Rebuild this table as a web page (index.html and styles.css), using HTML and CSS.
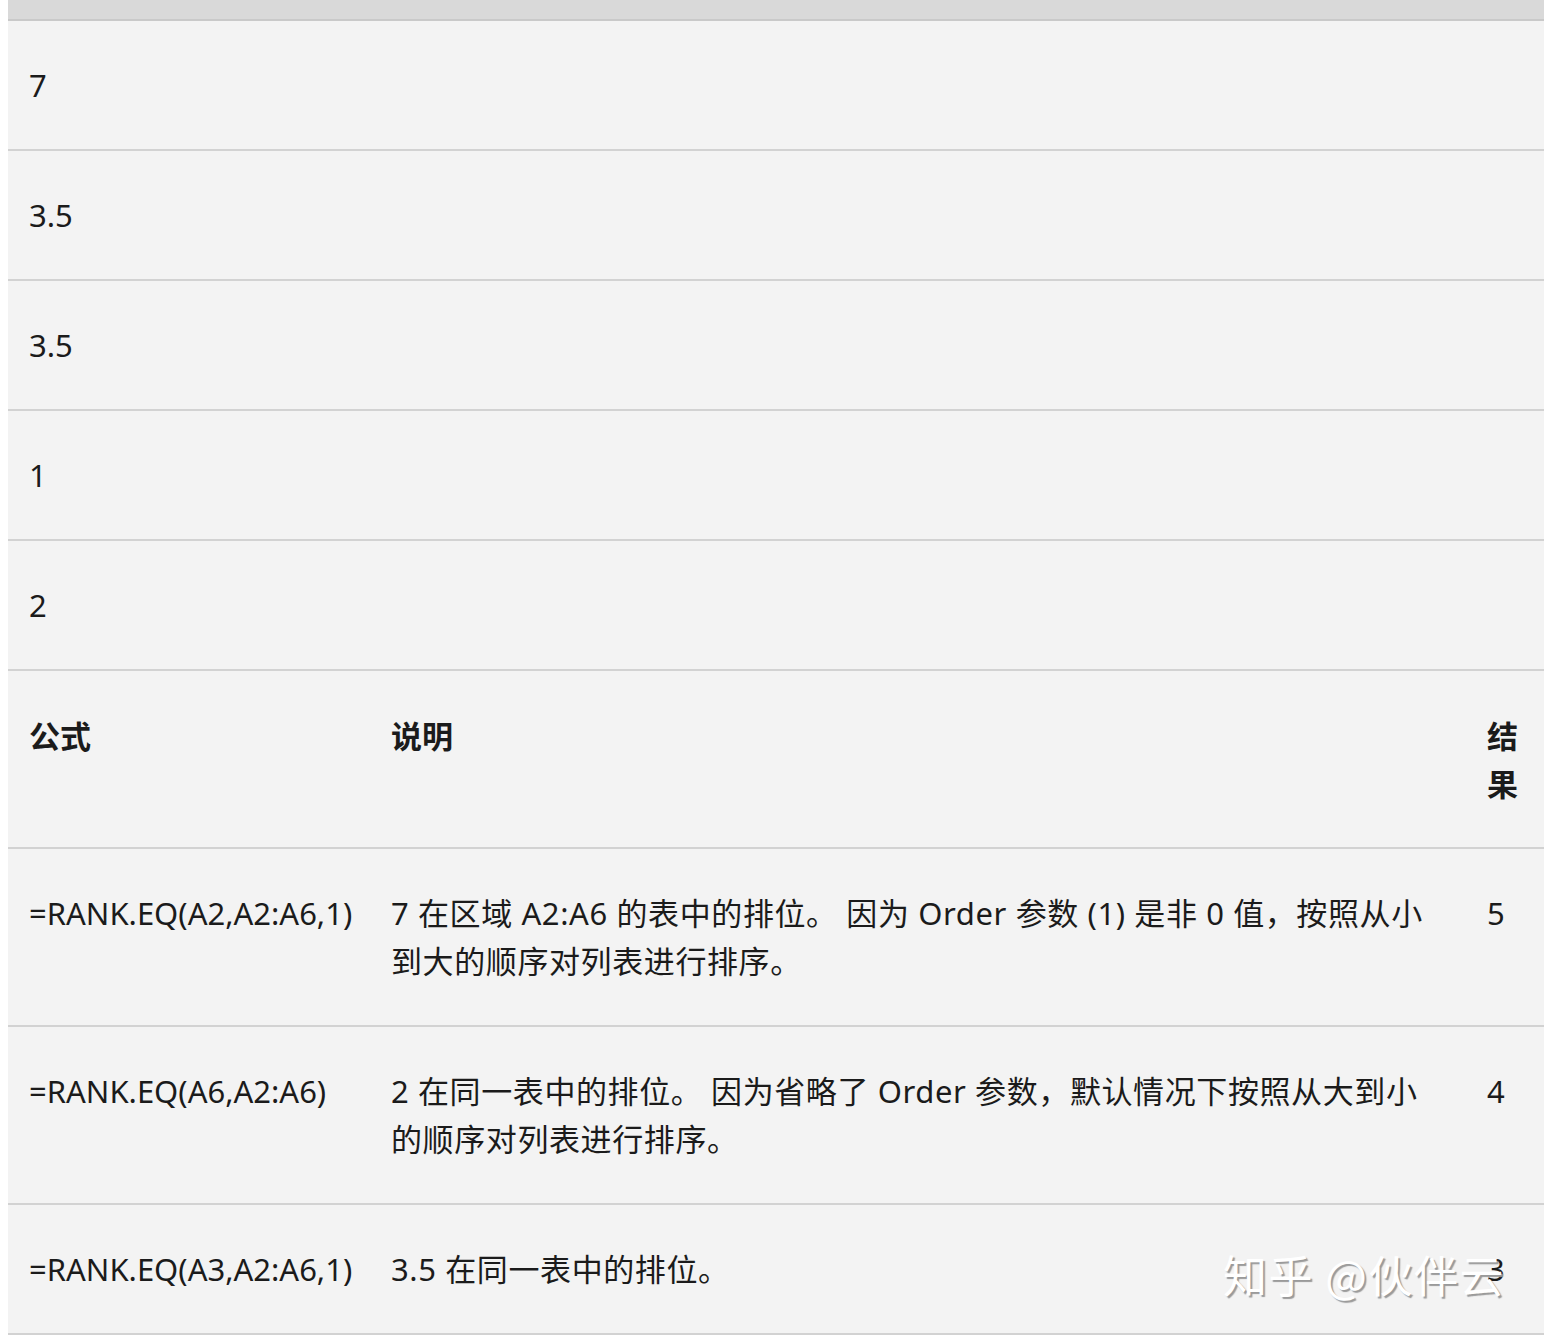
FILE: index.html
```html
<!DOCTYPE html>
<html lang="zh-CN">
<head>
<meta charset="utf-8">
<title>RANK.EQ</title>
<link rel="stylesheet" href="styles.css">
</head>
<body>
<div class="page">
  <div class="top-band"></div>
  <table class="data">
    <tbody>
      <tr><td>7</td></tr>
      <tr><td>3.5</td></tr>
      <tr><td>3.5</td></tr>
      <tr><td>1</td></tr>
      <tr><td>2</td></tr>
    </tbody>
  </table>
  <table class="formulas">
    <colgroup>
      <col class="c1">
      <col class="c2">
      <col class="c3">
    </colgroup>
    <thead>
      <tr><th>公式</th><th>说明</th><th>结果</th></tr>
    </thead>
    <tbody>
      <tr>
        <td>=RANK.EQ(A2,A2:A6,1)</td>
        <td class="desc">7 在区域 A2:A6 的表中的排位。 因为 Order 参数 (1) 是非 0 值，按照从小到大的顺序对列表进行排序。</td>
        <td>5</td>
      </tr>
      <tr>
        <td>=RANK.EQ(A6,A2:A6)</td>
        <td class="desc">2 在同一表中的排位。 因为省略了 Order 参数，默认情况下按照从大到小的顺序对列表进行排序。</td>
        <td>4</td>
      </tr>
      <tr>
        <td>=RANK.EQ(A3,A2:A6,1)</td>
        <td class="desc">3.5 在同一表中的排位。</td>
        <td>3</td>
      </tr>
    </tbody>
  </table>
  <div class="watermark">知乎 @伙伴云</div>
</div>
</body>
</html>
```

FILE: styles.css
```css
html, body {
  margin: 0;
  padding: 0;
  background: #ffffff;
}
body {
  padding: 0 8px;
  font-family: "Noto Sans", "Noto Sans CJK SC", sans-serif;
  color: #1b1b1b;
}
.page {
  position: relative;
  width: 1536px;
  background: #f3f3f3;
}
.top-band {
  height: 19px;
  background: #d9d9d9;
  border-bottom: 2px solid #c9c9c9;
}
table {
  width: 100%;
  border-collapse: collapse;
  table-layout: fixed;
  font-size: 31px;
  line-height: 48px;
}
td, th {
  padding: 40px 21px 40px 21px;
  vertical-align: top;
  text-align: left;
  border-bottom: 2px solid #d2d2d2;
}
th {
  font-weight: 700;
  font-family: "Noto Sans CJK SC", sans-serif;
}
.desc {
  letter-spacing: 0.6px;
  padding-right: 30px;
}
.c1 { width: 362px; }
.c2 { width: 1096px; }
.c3 { width: 78px; }
.watermark {
  position: absolute;
  left: 1215px;
  bottom: 36px;
  font-family: "Noto Sans CJK SC", sans-serif;
  font-weight: 400;
  font-size: 44px;
  line-height: 50px;
  color: #ffffff;
  text-shadow: 2px 2px 1px #9a9a9a;
  letter-spacing: 1.5px;
}
```
